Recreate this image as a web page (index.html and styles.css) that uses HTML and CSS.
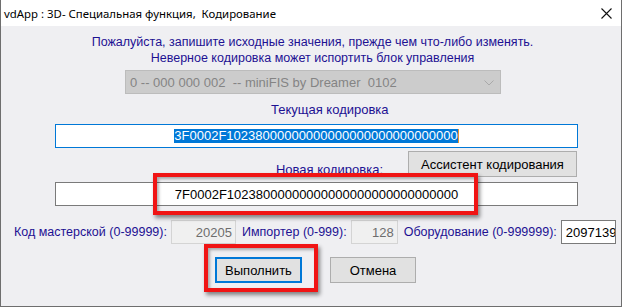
FILE: index.html
```html
<!DOCTYPE html>
<html lang="ru">
<head>
	<meta charset="UTF-8">
	<title>vdApp</title>
	<link rel="stylesheet" href="styles.css">
</head>
<body>
	<div class="window">
		<div class="titlebar">
			<span class="title">vdApp : 3D- Специальная функция,&nbsp; Кодирование</span>
			<svg class="close" width="11" height="11" viewBox="0 0 11 11"><path d="M0.5 0.5L10.5 10.5M10.5 0.5L0.5 10.5" stroke="#111" stroke-width="1.1" fill="none"/></svg>
		</div>

		<div class="client">
			<p class="note">Пожалуйста, запишите исходные значения, прежде чем что-либо изменять.</p>
			<p class="note">Неверное кодировка может испортить блок управления</p>

			<div class="combo">
				<span>0 -- 000 000 002&nbsp; -- miniFIS by Dreamer&nbsp; 0102</span>
				<svg class="chev" width="10" height="6" viewBox="0 0 10 6"><path d="M0.5 0.5L5 5L9.5 0.5" stroke="#a9a9a9" fill="none"/></svg>
			</div>

			<p class="caption">Текущая кодировка</p>
			<div class="code-box focus"><span class="sel">3F0002F10238000000000000000000000000000</span></div>

			<div class="new-row">
				<span class="caption new-label">Новая кодировка:</span>
				<div class="btn assist">Ассистент кодирования</div>
			</div>
			<div class="code-box">7F0002F10238000000000000000000000000000</div>

			<div class="ids">
				<span class="lbl">Код мастерской (0-99999):</span>
				<div class="num off w-shop">20205</div>
				<span class="lbl gap">Импортер (0-999):</span>
				<div class="num off w-imp">128</div>
				<span class="lbl gap">Оборудование (0-999999):</span>
				<div class="num w-eq">2097139</div>
			</div>

			<div class="actions">
				<div class="btn run">Выполнить</div>
				<div class="btn cancel">Отмена</div>
			</div>

			<!-- красные рамки поверх -->
			<div class="mark mark-code"></div>
			<div class="mark mark-run"></div>
		</div>
	</div>
</body>
</html>
```

FILE: styles.css
```css
*{
	padding: 0;
	margin: 0;
	box-sizing: border-box;
}
body{
	width: 623px;
	height: 307px;
	background: #fff;
	font-family: "Liberation Sans", Arial, sans-serif;
	font-size: 13px;
	overflow: hidden;
}
.window{
	width: 622px;
	height: 307px;
	border-left: 1px solid #6e6e6e;
	border-right: 1px solid #6e6e6e;
	border-bottom: 1px solid #6e6e6e;
	background: #efeff2;
	display: flex;
	flex-direction: column;
}
.titlebar{
	height: 26px;
	background: #fff;
	display: flex;
	align-items: center;
	padding-left: 3px;
	padding-right: 9px;
}
.title{
	font-family: "Noto Sans", "Liberation Sans", sans-serif;
	font-size: 11.4px;
	color: #000;
	flex: 1;
	padding-top: 1px;
}
.close{
	margin-top: 1px;
}
.client{
	position: relative;
	flex: 1;
	padding-top: 8px;
	display: flex;
	flex-direction: column;
	align-items: flex-start;
}
.note,
.caption{
	line-height: 16px;
	color: #1d1192;
}
.note{
	font-size: 12.5px;
	text-align: center;
	width: 100%;
	padding-left: 3px;
}
.combo{
	margin-top: 4px;
	margin-left: 124px;
	width: 376px;
	height: 24px;
	background: #cccccc;
	border: 1px solid #bcbcbc;
	color: #848484;
	display: flex;
	align-items: center;
	justify-content: space-between;
	padding-left: 4px;
	padding-right: 6px;
}
.chev{
	margin-top: 1px;
}
.caption{
	margin-top: 8px;
	margin-left: 270px;
}
.code-box{
	margin-left: 54px;
	width: 523px;
	height: 24px;
	background: #fff;
	border: 1px solid #7a7a7a;
	color: #000;
	display: flex;
	align-items: center;
	justify-content: center;
	overflow: hidden;
	white-space: nowrap;
	margin-top: 5px;
	padding-left: 0;
}
.code-box.focus{
	margin-top: 6px;
	border-color: #0078d7;
}
.sel{
	background: #0078d7;
	color: #fff;
	line-height: 14px;
	border-right: 1px solid #e8922e;
}
.new-row{
	margin-top: 3px;
	margin-left: 54px;
	width: 523px;
	display: flex;
	justify-content: flex-end;
	align-items: flex-end;
}
.new-label{
	margin: 0 25px 0 0;
	position: relative;
	top: 1px;
}
.btn{
	height: 26px;
	background: #e1e1e1;
	border: 1px solid #adadad;
	color: #000;
	display: flex;
	align-items: center;
	justify-content: center;
	white-space: nowrap;
}
.assist{
	width: 169px;
	margin-right: 1px;
}
.ids{
	margin-top: 14px;
	margin-left: 13px;
	display: flex;
	align-items: center;
	height: 24px;
	white-space: nowrap;
}
.lbl{
	font-size: 12.5px;
	color: #1d1192;
	margin-right: 4px;
	flex-shrink: 0;
}
.lbl.gap{
	margin-left: 6px;
}
.num{
	flex-shrink: 0;
	height: 24px;
	border: 1px solid #7a7a7a;
	background: #fff;
	display: flex;
	align-items: center;
	padding: 0 3px;
	overflow: hidden;
	white-space: nowrap;
}
.num.off{
	background: #f0f0f0;
	border-color: #d4d4d4;
	color: #6d6d6d;
	justify-content: flex-end;
}
.w-shop{
	width: 65px;
}
.w-imp{
	width: 47px;
}
.w-eq{
	width: 55px;
	padding-left: 4px;
}
.actions{
	margin-top: 13px;
	margin-left: 214px;
	display: flex;
	gap: 28px;
}
.run{
	width: 87px;
	border: 2px solid #0078d7;
}
.cancel{
	width: 86px;
}
.mark{
	position: absolute;
	border: 4px solid #f01414;
	box-shadow: 2px 3px 4px rgba(0,0,0,.45), inset 2px 2px 3px rgba(0,0,0,.3);
}
.mark-code{
	left: 152px;
	top: 147px;
	width: 325px;
	height: 42px;
}
.mark-run{
	left: 203px;
	top: 218px;
	width: 114px;
	height: 48px;
}
```
